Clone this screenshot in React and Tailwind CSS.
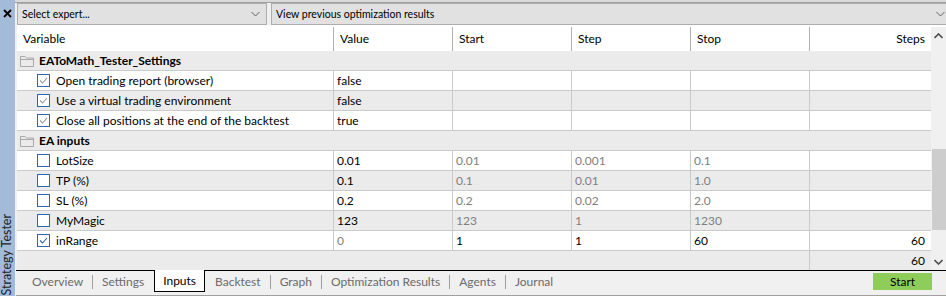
import React from "react";

const Chevron = ({ className = "", up = false, color = "#606060", w = 9, sw = 1 }) => (
  <svg width={w} height="6" viewBox="0 0 9 6" className={className}>
    <polyline
      points={up ? "0.5,5 4.5,1 8.5,5" : "0.5,1 4.5,5 8.5,1"}
      fill="none"
      stroke={color}
      strokeWidth={sw}
    />
  </svg>
);

const Folder = () => (
  <svg width="14" height="12" viewBox="0 0 14 12" className="shrink-0">
    <path d="M0.5 1.5 H5 L6.5 3 H13.5 V11.5 H0.5 Z" fill="none" stroke="#a8a8a8" strokeWidth="1" />
    <path d="M0.5 4.5 H13.5" stroke="#a8a8a8" strokeWidth="1" />
  </svg>
);

const Check = ({ checked, gray }) => (
  <div className="w-[13px] h-[13px] border border-[#2a68ad] bg-white flex items-center justify-center shrink-0">
    {checked && (
      <svg width="9" height="7" viewBox="0 0 9 7">
        <polyline points="1,3.5 3.5,6 8,1" fill="none" stroke={gray ? "#9a9a9a" : "#2a68ad"} strokeWidth="1.1" />
      </svg>
    )}
  </div>
);

const COLS = "grid grid-cols-[316px_119px_119px_119px_119px_122px]";
const LINE = "border-[#cacaca]";

const rowsA = [
  ["Open trading report (browser)", "false"],
  ["Use a virtual trading environment", "false"],
  ["Close all positions at the end of the backtest", "true"],
];

const rowsB = [
  { n: "LotSize", v: ["0.01", "0.01", "0.001", "0.1", ""], c: false },
  { n: "TP (%)", v: ["0.1", "0.1", "0.01", "1.0", ""], c: false },
  { n: "SL (%)", v: ["0.2", "0.2", "0.02", "2.0", ""], c: false },
  { n: "MyMagic", v: ["123", "123", "1", "1230", ""], c: false },
  { n: "inRange", v: ["0", "1", "1", "60", "60"], c: true },
];

function GroupRow({ title }) {
  return (
    <div className={`h-[20px] bg-[#ebebeb] border-b ${LINE} flex items-center pl-[3px] gap-[5px]`}>
      <Folder />
      <span className="font-bold text-black">{title}</span>
    </div>
  );
}

function DataRow({ label, checked, grayCheck, values, bg, colors }) {
  return (
    <div className={`${COLS} h-[20px] border-b ${LINE} ${bg}`}>
      <div className="flex items-center pl-[20px] gap-[6px]">
        <Check checked={checked} gray={grayCheck} />
        <span className="text-black whitespace-nowrap">{label}</span>
      </div>
      {values.map((v, i) => (
        <div
          key={i}
          className={`border-l ${LINE} flex items-center ${i === 4 ? "justify-end pr-[6px]" : "pl-[3px]"} ${colors[i]}`}
        >
          {v}
        </div>
      ))}
    </div>
  );
}

const Sep = () => <span className="w-px h-[14px] bg-[#a0a0a0] shrink-0" />;

export default function App() {
  const headers = ["Value", "Start", "Step", "Stop"];
  return (
    <div className="w-[946px] h-[296px] flex bg-[#f0f0f0] overflow-hidden font-['Lato',sans-serif] text-[12px] leading-none">
      {/* sidebar */}
      <div className="w-[15px] h-full bg-[#a3bad8] flex flex-col items-center justify-between shrink-0">
        <svg width="9" height="9" viewBox="0 0 9 9" className="mt-[9px]">
          <path d="M1 1 L8 8 M8 1 L1 8" stroke="#000" strokeWidth="1.8" />
        </svg>
        <span className="[writing-mode:vertical-rl] rotate-180 text-[#222] text-[12.5px] pb-[5px] whitespace-nowrap">Strategy Tester</span>
      </div>
      <div className="w-px bg-[#f0f0f0]" />
      {/* main */}
      <div className="flex-1 flex flex-col min-w-0">
        <div className="h-[3px] bg-[#dadada] border-b border-[#a0a0a0] -ml-[1px]" />
        <div className="h-[22px] flex gap-[4px] pl-[1px] text-[10.5px]">
          <div className="w-[250px] h-[22px] bg-[#e1e1e1] border border-[#adadad] flex items-center justify-between pl-[4px] pr-[6px]">
            <span className="text-black">Select expert...</span>
            <Chevron />
          </div>
          <div className="flex-1 h-[22px] bg-[#e1e1e1] border border-[#adadad] flex items-center justify-between pl-[4px] pr-[2px] mr-[-2px]">
            <span className="text-black">View previous optimization results</span>
            <Chevron />
          </div>
        </div>
        <div className="flex pl-[1px]">
          {/* table */}
          <div className="w-[914px] flex flex-col">
            <div className={`${COLS} h-[26px] bg-white pt-[2px]`}>
              <div className="flex items-center pl-[6px] text-black">Variable</div>
              {headers.map((h) => (
                <div key={h} className="border-l border-[#b0b0b0] flex items-center pl-[6px] text-black">
                  {h}
                </div>
              ))}
              <div className="border-l border-[#b0b0b0] flex items-center justify-end pr-[6px] text-black">Steps</div>
            </div>
            <GroupRow title="EAToMath_Tester_Settings" />
            {rowsA.map(([l, v], i) => (
              <DataRow
                key={l}
                label={l}
                checked
                grayCheck
                values={[v, "", "", "", ""]}
                bg={i % 2 === 0 ? "bg-white" : "bg-[#ebebeb]"}
                colors={["text-black", "", "", "", ""]}
              />
            ))}
            <GroupRow title="EA inputs" />
            {rowsB.map((r, i) => (
              <DataRow
                key={r.n}
                label={r.n}
                checked={r.c}
                values={r.v}
                bg={i % 2 === 0 ? "bg-white" : "bg-[#ebebeb]"}
                colors={
                  r.c
                    ? ["text-[#808080]", "text-black", "text-black", "text-black", "text-black"]
                    : ["text-black", "text-[#808080]", "text-[#808080]", "text-[#808080]", "text-black"]
                }
              />
            ))}
            <div className={`${COLS} h-[19px] bg-[#ebebeb]`}>
              <div className="col-span-5" />
              <div className={`border-l ${LINE} flex items-center justify-end pr-[6px] text-black`}>60</div>
            </div>
          </div>
          {/* scrollbar */}
          <div className="w-[15px] bg-white flex flex-col">
            <div className="mt-[2px] h-[243px] bg-[#f0f0f0] flex flex-col">
              <div className="h-[17px] flex items-center justify-center">
                <Chevron up color="#505050" sw={1.6} />
              </div>
              <div className="h-[105px]" />
              <div className="h-[81px] bg-[#cdcdcd] ml-[1px]" />
              <div className="flex-1" />
              <div className="h-[17px] flex items-center justify-center">
                <Chevron color="#505050" sw={1.6} />
              </div>
            </div>
          </div>
        </div>
        {/* tabs */}
        <div className="h-[26px] border-t border-black border-b border-b-[#a0a0a0] flex items-start">
          <div className="flex items-center h-[21px] pl-[7px]">
            <span className="px-[9px] text-[#6b6b6b]">Overview</span>
            <Sep />
            <span className="px-[9px] text-[#6b6b6b]">Settings</span>
          </div>
          <div className="h-[22px] bg-white border-x border-b border-black flex items-center px-[8px] text-black -mt-[1px] pt-[1px] ml-[1px]">
            Inputs
          </div>
          <div className="flex items-center h-[21px] pl-[1px]">
            <span className="px-[9px] text-[#6b6b6b]">Backtest</span>
            <Sep />
            <span className="px-[9px] text-[#6b6b6b]">Graph</span>
            <Sep />
            <span className="px-[9px] text-[#6b6b6b]">Optimization Results</span>
            <Sep />
            <span className="px-[9px] text-[#6b6b6b]">Agents</span>
            <Sep />
            <span className="px-[9px] text-[#6b6b6b]">Journal</span>
          </div>
          <div className="flex-1" />
          <div className="mt-[2px] mr-[14px] w-[59px] h-[17px] bg-[#8fcd5b] flex items-center justify-center text-black">
            Start
          </div>
        </div>
      </div>
    </div>
  );
}
